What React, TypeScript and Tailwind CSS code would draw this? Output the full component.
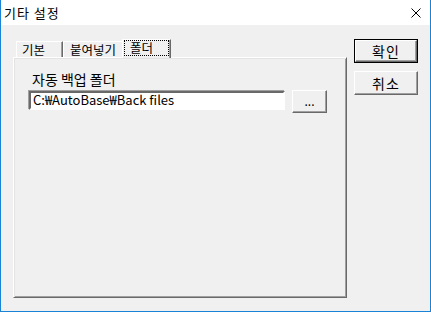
import React from "react"

const raised =
  "border border-t-white border-l-white border-r-[#696969] border-b-[#696969] shadow-[inset_-1px_-1px_#a0a0a0]"

export default function App() {
  return (
    <div className="w-[431px] h-[312px] bg-[#f0f0f0] border-l border-r border-b border-[#1883d7] flex flex-col font-['Noto_Sans_CJK_KR',sans-serif] text-[12px] text-black overflow-hidden">
      {/* title bar */}
      <div className="h-[25px] bg-white flex items-center justify-between pl-[3px] pr-[9px] shrink-0">
        <span className="text-[13px] tracking-[1px] leading-[16px]">기타 설정</span>
        <svg width="10" height="10" viewBox="0 0 10 10" className="block">
          <path d="M0.5 0.5 L9.5 9.5 M9.5 0.5 L0.5 9.5" stroke="#000" strokeWidth="1" fill="none" />
        </svg>
      </div>

      <div className="flex pt-[14px] pl-[12px]">
        {/* tab control */}
        <div className="flex flex-col w-[334px]">
          <div className="flex items-end h-[18px] pl-[3px]">
            <div className="w-[47px] h-[16px] border-t border-l border-r border-t-white border-l-white border-r-[#696969] shadow-[inset_-1px_0_#a0a0a0] pl-[5px] text-[12.5px] leading-[15px]">
              기본
            </div>
            <div className="w-[61px] h-[16px] border-t border-l border-r border-t-white border-l-white border-r-[#696969] shadow-[inset_-1px_0_#a0a0a0] pl-[6px] text-[12.5px] leading-[15px]">
              붙여넣기
            </div>
            <div className="relative z-10 -ml-[2px] -mb-[1px] w-[49px] h-[19px] bg-[#f0f0f0] border-t border-l border-r border-t-white border-l-white border-r-[#696969] shadow-[inset_-1px_0_#a0a0a0] px-[1px]">
              <div className="h-[16px] border border-dotted border-black pl-[5px] text-[12.5px] leading-[13px]">폴더</div>
            </div>
          </div>

          <div className="h-[241px] border border-t-white border-l-white border-r-[#696969] border-b-[#696969] shadow-[inset_1px_1px_#e3e3e3,inset_-1px_-1px_#a0a0a0] pt-[13px] pl-[15px]">
            <div className="ml-[3px] h-[17px] text-[14px] leading-[17px] mb-[2px]">자동 백업 폴더</div>
            <div className="flex items-start">
              <div className="mt-[1px] w-[256px] h-[19px] bg-white border-2 border-t-[#696969] border-l-[#696969] border-r-white border-b-white shadow-[-1px_-1px_#a0a0a0] pl-[2px] text-[13px] leading-[14px]">
                C:₩AutoBase₩Back files
              </div>
              <button className={`ml-[7px] w-[35px] h-[23px] bg-[#f0f0f0] ${raised} flex items-center justify-center leading-[12px] pb-[2px]`}>
                ...
              </button>
            </div>
          </div>
        </div>

        {/* buttons */}
        <div className="ml-[7px] flex flex-col gap-[8px]">
          <div className="w-[64px] h-[24px] border border-black">
            <button className={`w-full h-full bg-[#f0f0f0] ${raised} flex items-center justify-center text-[14px] tracking-[1px] leading-[16px]`}>
              확인
            </button>
          </div>
          <button className={`w-[64px] h-[24px] bg-[#f0f0f0] ${raised} flex items-center justify-center text-[14px] tracking-[1px] leading-[16px]`}>
            취소
          </button>
        </div>
      </div>
    </div>
  )
}
